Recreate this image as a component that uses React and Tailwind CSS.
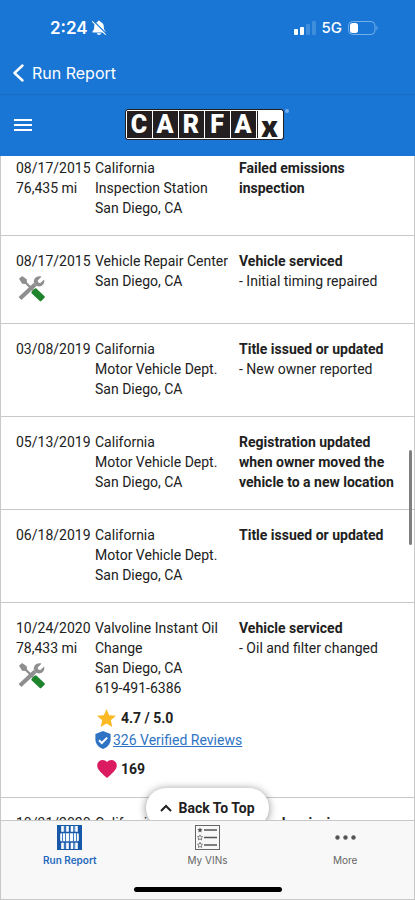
import React from 'react';

const records = [
  {
    date: '08/17/2015',
    miles: '76,435 mi',
    place: ['California', 'Inspection Station', 'San Diego, CA'],
    title: 'Failed emissions inspection',
    first: true,
  },
  {
    date: '08/17/2015',
    tools: true,
    place: ['Vehicle Repair Center', 'San Diego, CA'],
    title: 'Vehicle serviced',
    details: ['Initial timing repaired'],
  },
  {
    date: '03/08/2019',
    place: ['California', 'Motor Vehicle Dept.', 'San Diego, CA'],
    title: 'Title issued or updated',
    details: ['New owner reported'],
  },
  {
    date: '05/13/2019',
    place: ['California', 'Motor Vehicle Dept.', 'San Diego, CA'],
    title: 'Registration updated when owner moved the vehicle to a new location',
  },
  {
    date: '06/18/2019',
    place: ['California', 'Motor Vehicle Dept.', 'San Diego, CA'],
    title: 'Title issued or updated',
  },
  {
    date: '10/24/2020',
    miles: '78,433 mi',
    tools: true,
    place: ['Valvoline Instant Oil Change', 'San Diego, CA', '619-491-6386'],
    title: 'Vehicle serviced',
    details: ['Oil and filter changed'],
    rating: '4.7 / 5.0',
    reviews: '326 Verified Reviews',
    likes: '169',
  },
  {
    date: '10/31/2020',
    place: ['California'],
    title: 'Passed emissions inspection',
  },
];

function BellOff() {
  return (
    <svg viewBox="0 0 16 16" className="h-4 w-4" aria-hidden="true">
      <path d="M8 .8c.9 0 1.400.5 1.500 1.200 2.200.8 3.300 2.400 3.300 4.500 0 3 .8 3.800 1.700 4.900.3.500 0 1.100-.6 1.100H2.100c-.6 0-.9-.6-.6-1.100.9-1.100 1.700-1.900 1.700-4.900 0-2.100 1.100-3.700 3.300-4.500C6.600 1.300 7.100.8 8 .8z" fill="#fff" />
      <path d="M5.800 13.300h4.400c-.2 1-1.100 1.700-2.200 1.700s-2-.7-2.200-1.700z" fill="#fff" />
      <path d="M2.500 1l12.500 12.500" stroke="#1976d5" strokeWidth="1.200" />
      <path d="M1.500 1.600l12.800 12.800" stroke="#fff" strokeWidth="1.100" strokeLinecap="round" />
    </svg>
  );
}

function Signal() {
  return (
    <svg viewBox="0 0 22 14" className="h-3.5 w-[22px]" aria-hidden="true">
      <rect x="0" y="8" width="4" height="6" rx="1" fill="#fff" />
      <rect x="6" y="6" width="4" height="8" rx="1" fill="#fff" />
      <rect x="12" y="3" width="4" height="11" rx="1" fill="#3f8ddd" />
      <rect x="18" y="0" width="4" height="14" rx="1" fill="#3f8ddd" />
    </svg>
  );
}

function Battery() {
  return (
    <svg viewBox="0 0 30 14" className="h-3.5 w-[30px]" aria-hidden="true">
      <rect x=".5" y=".5" width="26.500" height="13" rx="4" fill="none" stroke="#76b0ec" />
      <rect x="2" y="2" width="8" height="10" rx="2.500" fill="#fff" />
      <path d="M28.500 4.800c1.300.5 1.300 3.900 0 4.400z" fill="#76b0ec" />
    </svg>
  );
}

function Tools() {
  return (
    <svg viewBox="0 0 27 27" className="h-[27px] w-[27px]" aria-hidden="true">
      <path d="M2 23.500L17 9.500" stroke="#8f8f8f" strokeWidth="4.200" />
      <path d="M23.500 1.700l-3.800 3.700.5 2.100 2.200.5 3.700-3.600c1 3.200-1.200 7-5.100 7.100-1.400 0-2.700-.4-3.700-1.400-2.600-2.600-1.600-6.600 1.200-8.100 1.600-.9 3.400-1 5-.3z" fill="#8f8f8f" />
      <path d="M1 3.700L4 1l4.700 3.200.3 3.300 7 6.800-1.600 1.600-7-6.800-3.300-.3z" fill="#8f8f8f" />
      <path d="M13.800 18.500c-.6-.7-.6-1.200 0-1.900l2.800-2.800c.7-.7 1.300-.8 2-.1l7.700 7.300c.7.700.7 1.300 0 2l-2.800 2.800c-.7.700-1.400.7-2 0z" fill="#1e842c" />
    </svg>
  );
}

function Star() {
  return (
    <svg viewBox="2 2 20 19" className="h-[18px] w-[19px]" aria-hidden="true">
      <path d="M12 17.270L18.180 21l-1.640-7.030L22 9.240l-7.190-.61L12 2 9.190 8.630 2 9.240l5.460 4.730L5.820 21z" fill="#fdb924" />
    </svg>
  );
}

function Shield() {
  return (
    <svg viewBox="0 0 16 18" className="h-[18px] w-4 shrink-0" aria-hidden="true">
      <path d="M8 0l7.600 3v5.600c0 4.200-3.200 8-7.600 9.400C3.600 16.600.4 12.800.4 8.600V3z" fill="#2f74c4" />
      <path d="M4 9.200l2.800 2.800L12.200 6.600" fill="none" stroke="#fff" strokeWidth="2" />
    </svg>
  );
}

function Heart() {
  return (
    <svg viewBox="2 3 20 18.400" className="h-[18px] w-5" aria-hidden="true">
      <path d="M12 21.350l-1.450-1.320C5.400 15.360 2 12.280 2 8.500 2 5.420 4.420 3 7.500 3c1.740 0 3.410.81 4.500 2.090C13.090 3.810 14.760 3 16.500 3 19.580 3 22 5.420 22 8.500c0 3.780-3.400 6.860-8.550 11.540z" fill="#da1b60" />
    </svg>
  );
}

function ReportIcon() {
  return (
    <svg viewBox="0 0 25 25" className="h-[25px] w-[25px]" aria-hidden="true">
      <rect width="25" height="25" fill="#1758a8" />
      <path d="M5.500 1v23M10.500 1v23M15 1v23M19.500 1v23" stroke="#fff" strokeWidth="2.600" />
      <path d="M8 1v23M17.500 1v23" stroke="#5f94d2" strokeWidth="1" />
      <rect x="2.500" y="7.500" width="20" height="9.500" rx="2" fill="#fff" stroke="#1758a8" strokeWidth="1.400" />
      <path d="M5.500 8v9M8.500 8v9M12.500 8v9M16.500 8v9M19.500 8v9" stroke="#3f7cc4" strokeWidth="1.100" />
    </svg>
  );
}

function ListIcon() {
  const star = 'M0-2.600l.8 1.700 1.800.2-1.300 1.200.3 1.900L0 1.500l-1.600.9.300-1.900-1.300-1.200 1.800-.2z';
  return (
    <svg viewBox="0 0 25 25" className="h-[25px] w-[25px]" aria-hidden="true">
      <rect x=".5" y=".5" width="24" height="24" fill="none" stroke="#666" />
      <path d="M9 5h13M9 12.500h13M9 20h13" stroke="#555" strokeWidth="1.600" />
      <path d={star} transform="translate(5 5)" fill="#555" />
      <path d={star} transform="translate(5 12.500)" fill="none" stroke="#666" strokeWidth=".8" />
      <path d={star} transform="translate(5 20)" fill="none" stroke="#666" strokeWidth=".8" />
    </svg>
  );
}

function Logo() {
  return (
    <a href="#home" aria-label="CARFAX home" className="flex items-start gap-px">
      <span className="flex rounded-[3px] border border-[#231f20] bg-[#231f20]">
        <span className="flex gap-px rounded-[2px] border border-white bg-white">
          {['C', 'A', 'R', 'F', 'A'].map((letter, i) => (
            <span key={i} className="flex h-[27px] w-[25px] items-center justify-center bg-[#231f20] text-[25px] leading-none font-black text-white">
              {letter}
            </span>
          ))}
          <span className="flex h-[27px] w-[25px] items-start justify-center border-l border-[#231f20] bg-white font-['Inter'] text-[28px] leading-[33px] font-black text-[#231f20]">
            x
          </span>
        </span>
      </span>
      <span className="h-1 w-1 rounded-full bg-[#76b0ec]" />
    </a>
  );
}

function Row({ record }) {
  const pad = record.first ? 'pt-0.5 pb-[17px]' : 'pt-[15px] pb-[17px]';
  return (
    <tr className="border-b border-[#c8c8c8] align-top">
      <td className={`pl-[15px] whitespace-nowrap ${pad}`}>
        <p>{record.date}</p>
        {record.miles && <p>{record.miles}</p>}
        {record.tools && (
          <div className="py-1 pl-0.5">
            <Tools />
          </div>
        )}
      </td>
      <td className={`${pad}`}>
        {record.place.map((line) => (
          <p key={line}>{line}</p>
        ))}
        {record.rating && (
          <div className="flex flex-col pt-2.5 pb-px whitespace-nowrap">
            <p className="flex items-center gap-[5px] pl-0.5 font-bold">
              <Star />
              {record.rating}
            </p>
            <p className="mt-0.5 flex items-center gap-0.5">
              <Shield />
              <a href="#reviews" className="text-[#2f74c4] underline">{record.reviews}</a>
            </p>
            <p className="mt-[9px] flex items-center gap-1 pl-0.5 font-bold">
              <Heart />
              {record.likes}
            </p>
          </div>
        )}
      </td>
      <td className={`pr-4 ${pad}`}>
        <p className="font-bold">{record.title}</p>
        {record.details && record.details.map((line) => <p key={line}>- {line}</p>)}
      </td>
    </tr>
  );
}

export default function App() {
  return (
    <div className="flex h-screen flex-col bg-white font-['Roboto',sans-serif] text-sm leading-5 text-[#212121]">
      <header className="shrink-0 bg-[#1976d5] text-white">
        <div className="flex h-[52px] items-center justify-between pt-1 pr-[37px] pl-[50px]">
          <div className="flex items-center gap-[3px] font-['Inter',sans-serif] text-[17px] font-semibold">
            <span>2:24</span>
            <BellOff />
          </div>
          <div className="flex items-center gap-1.5 font-['Inter',sans-serif] text-[15px] font-medium">
            <Signal />
            <span>5G</span>
            <Battery />
          </div>
        </div>
        <div className="flex h-[43px] items-center border-b border-[#176cc4] pl-3">
          <button type="button" className="flex items-center gap-2 font-['Inter',sans-serif] text-base">
            <svg viewBox="0 0 12 18" className="h-[18px] w-3" aria-hidden="true">
              <path d="M10.500 1.500L2.500 9l8 7.500" fill="none" stroke="#fff" strokeWidth="2.400" strokeLinecap="round" strokeLinejoin="round" />
            </svg>
            Run Report
          </button>
        </div>
        <div className="grid h-[61px] grid-cols-[1fr_auto_1fr] items-center pr-0.5 pb-0.5">
          <button type="button" aria-label="Menu" className="ml-3.5 flex w-[18px] flex-col gap-[3px]">
            <span className="h-0.5 w-full bg-white" />
            <span className="h-0.5 w-full bg-white" />
            <span className="h-0.5 w-full bg-white" />
          </button>
          <Logo />
        </div>
      </header>

      <main className="relative min-h-0 flex-1 overflow-hidden border-x border-[#c8c8c8]">
        <table className="w-full table-fixed border-collapse text-left">
          <colgroup>
            <col className="w-[94px]" />
            <col className="w-[144px]" />
            <col />
          </colgroup>
          <tbody>
            {records.map((record, i) => (
              <Row key={i} record={record} />
            ))}
          </tbody>
        </table>
        <div className="absolute top-[294px] right-0.5 h-[95px] w-[3px] rounded-full bg-[#808080]" />
        <div className="absolute inset-x-0 -bottom-2 flex justify-center">
          <button type="button" className="flex h-10 items-center gap-1.5 rounded-full bg-white px-3.5 font-bold shadow-[0_1px_8px_rgba(0,0,0,0.45)]">
            <svg viewBox="0 0 12 8" className="h-2 w-3" aria-hidden="true">
              <path d="M1 7l5-5 5 5" fill="none" stroke="#212121" strokeWidth="2" />
            </svg>
            Back To Top
          </button>
        </div>
      </main>

      <nav className="shrink-0 border border-[#c8c8c8] bg-[#f8f8f8] font-['Inter',sans-serif] text-[10px] leading-3 text-[#666]">
        <div className="grid h-[59px] grid-cols-3">
          <a href="#report" className="flex flex-col items-center gap-1 pt-1 font-semibold text-[#1f68bd]">
            <ReportIcon />
            Run Report
          </a>
          <a href="#vins" className="flex flex-col items-center gap-1 pt-1">
            <ListIcon />
            My VINs
          </a>
          <a href="#more" className="flex flex-col items-center gap-1 pt-1">
            <svg viewBox="0 0 25 25" className="h-[25px] w-[25px]" aria-hidden="true">
              <g fill="#555">
                <circle cx="4.500" cy="12.500" r="2.200" />
                <circle cx="12.500" cy="12.500" r="2.200" />
                <circle cx="20.500" cy="12.500" r="2.200" />
              </g>
            </svg>
            More
          </a>
        </div>
        <div className="flex h-[19px] justify-center pt-[7px]">
          <div className="h-[5px] w-[148px] rounded-full bg-black" />
        </div>
      </nav>
    </div>
  );
}
